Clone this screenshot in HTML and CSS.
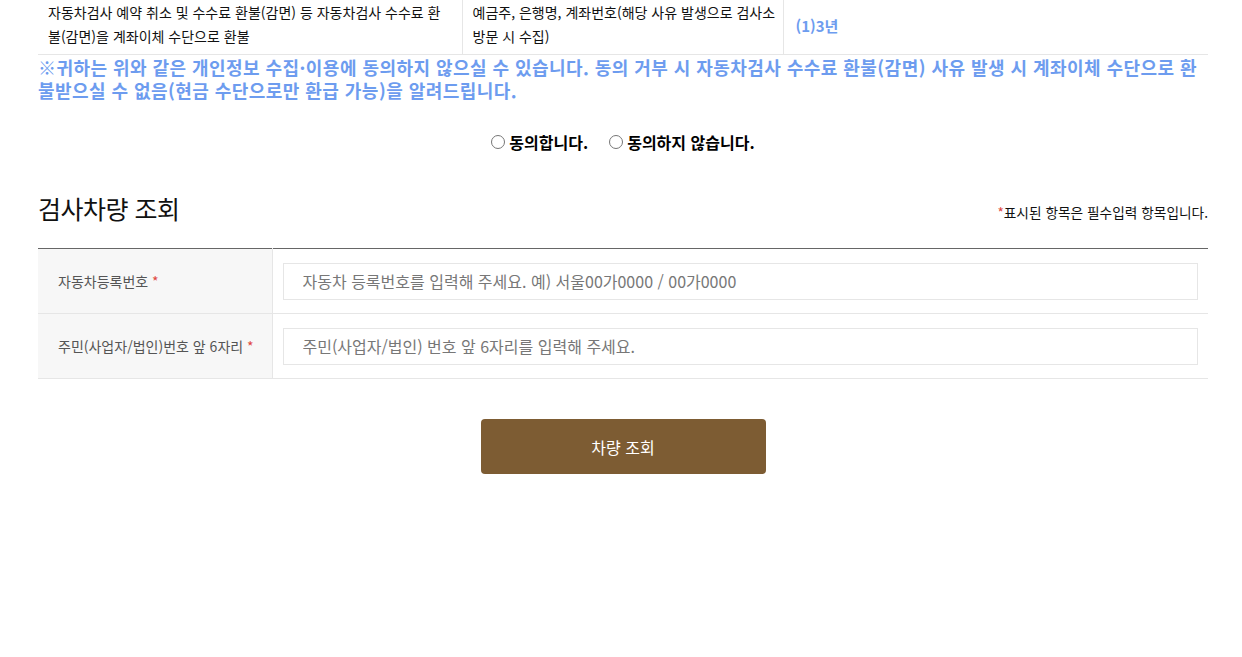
FILE: index.html
```html
<!DOCTYPE html>
<html lang="ko">
<head>
<meta charset="utf-8">
<title>검사차량 조회</title>
<link rel="stylesheet" href="styles.css">
</head>
<body>
<div class="wrap">
  <table class="info-table">
    <colgroup><col class="c1"><col class="c2"><col class="c3"></colgroup>
    <tbody>
      <tr>
        <td>자동차검사 예약 취소 및 수수료 환불(감면) 등 자동차검사 수수료 환<br>불(감면)을 계좌이체 수단으로 환불</td>
        <td>예금주, 은행명, 계좌번호(해당 사유 발생으로 검사소<br>방문 시 수집)</td>
        <td class="period">(1)3년</td>
      </tr>
    </tbody>
  </table>

  <p class="notice">※귀하는 위와 같은 개인정보 수집·이용에 동의하지 않으실 수 있습니다. 동의 거부 시 자동차검사 수수료 환불(감면) 사유 발생 시 계좌이체 수단으로 환불받으실 수 없음(현금 수단으로만 환급 가능)을 알려드립니다.</p>

  <div class="agree">
    <label class="agree-item"><input type="radio" name="agree">동의합니다.</label>
    <label class="agree-item"><input type="radio" name="agree">동의하지 않습니다.</label>
  </div>

  <div class="section-head">
    <h2 class="title">검사차량 조회</h2>
    <p class="req-note"><span class="req">*</span>표시된 항목은 필수입력 항목입니다.</p>
  </div>

  <table class="form-table">
    <colgroup><col class="f1"><col class="f2"></colgroup>
    <tbody>
      <tr>
        <th>자동차등록번호 <span class="req">*</span></th>
        <td><input class="field" type="text" placeholder="자동차 등록번호를 입력해 주세요. 예) 서울00가0000 / 00가0000"></td>
      </tr>
      <tr>
        <th>주민(사업자/법인)번호 앞 6자리 <span class="req">*</span></th>
        <td><input class="field" type="text" placeholder="주민(사업자/법인) 번호 앞 6자리를 입력해 주세요."></td>
      </tr>
    </tbody>
  </table>

  <div class="btn-row">
    <button class="btn" type="button">차량 조회</button>
  </div>
</div>
</body>
</html>
```

FILE: styles.css
```css
* { box-sizing: border-box; }

html, body {
  margin: 0;
  padding: 0;
  background: #fff;
}

body {
  font-family: "Noto Sans CJK KR", "Noto Sans", sans-serif;
  color: #111;
}

.wrap {
  width: 1170px;
  margin-left: 38px;
}

/* top info table */
.info-table {
  width: 100%;
  table-layout: fixed;
  border-collapse: collapse;
  font-size: 14px;
  color: #111;
}
.info-table .c1 { width: 424px; }
.info-table .c2 { width: 321px; }
.info-table td {
  padding: 0 4px 6px 10px;
  line-height: 24px;
  border-bottom: 1px solid #e6e6e6;
  border-right: 1px solid #e6e6e6;
  vertical-align: middle;
  word-break: keep-all;
}
.info-table td.period {
  border-right: 0;
  padding: 0 0 2px 12px;
  font-size: 15px;
  font-weight: 700;
  color: #6d9cef;
}

/* notice */
.notice {
  margin: 1px 0 0;
  font-size: 18px;
  line-height: 23px;
  font-weight: 700;
  letter-spacing: 0.45px;
  color: #6d9cef;
}

/* agree radios */
.agree {
  display: flex;
  justify-content: center;
  gap: 21px;
  margin-top: 30px;
  font-size: 16px;
  font-weight: 700;
  line-height: 20px;
  color: #000;
}
.agree-item {
  display: flex;
  align-items: center;
}
.agree-item input {
  margin: 0 4px 0 0;
  width: 14px;
  height: 14px;
}

/* section head */
.section-head {
  display: flex;
  justify-content: space-between;
  align-items: flex-end;
  margin-top: 41px;
}
.title {
  margin: 0;
  font-size: 25px;
  font-weight: 400;
  line-height: 30px;
  letter-spacing: -0.5px;
  color: #111;
}
.req-note {
  margin: 0 0 2px;
  font-size: 13.7px;
  line-height: 18px;
  color: #111;
}
.req { color: #e0473f; }

/* form table */
.form-table {
  width: 100%;
  margin-top: 25px;
  table-layout: fixed;
  border-collapse: collapse;
  border-top: 1px solid #666;
}
.form-table .f1 { width: 234px; }
.form-table th {
  height: 65px;
  padding: 0 0 0 20px;
  text-align: left;
  font-weight: 400;
  font-size: 14px;
  color: #555;
  background: #f7f7f7;
  border-right: 1px solid #e6e6e6;
  border-bottom: 1px solid #e6e6e6;
}
.form-table td {
  height: 65px;
  padding: 0 10px;
  border-bottom: 1px solid #e6e6e6;
}
.field {
  display: block;
  width: 100%;
  height: 37px;
  padding: 0 19px;
  border: 1px solid #e6e6e6;
  border-radius: 0;
  font-family: "Noto Sans CJK KR", "Noto Sans", sans-serif;
  font-size: 16px;
  color: #333;
  outline: none;
}
.field::placeholder { color: #777; }

/* button */
.btn-row {
  display: flex;
  justify-content: center;
  margin-top: 40px;
}
.btn {
  width: 285px;
  height: 55px;
  border: 0;
  border-radius: 4px;
  background: #7d5c33;
  color: #fff;
  font-family: "Noto Sans CJK KR", "Noto Sans", sans-serif;
  font-size: 16px;
  cursor: pointer;
}
```
